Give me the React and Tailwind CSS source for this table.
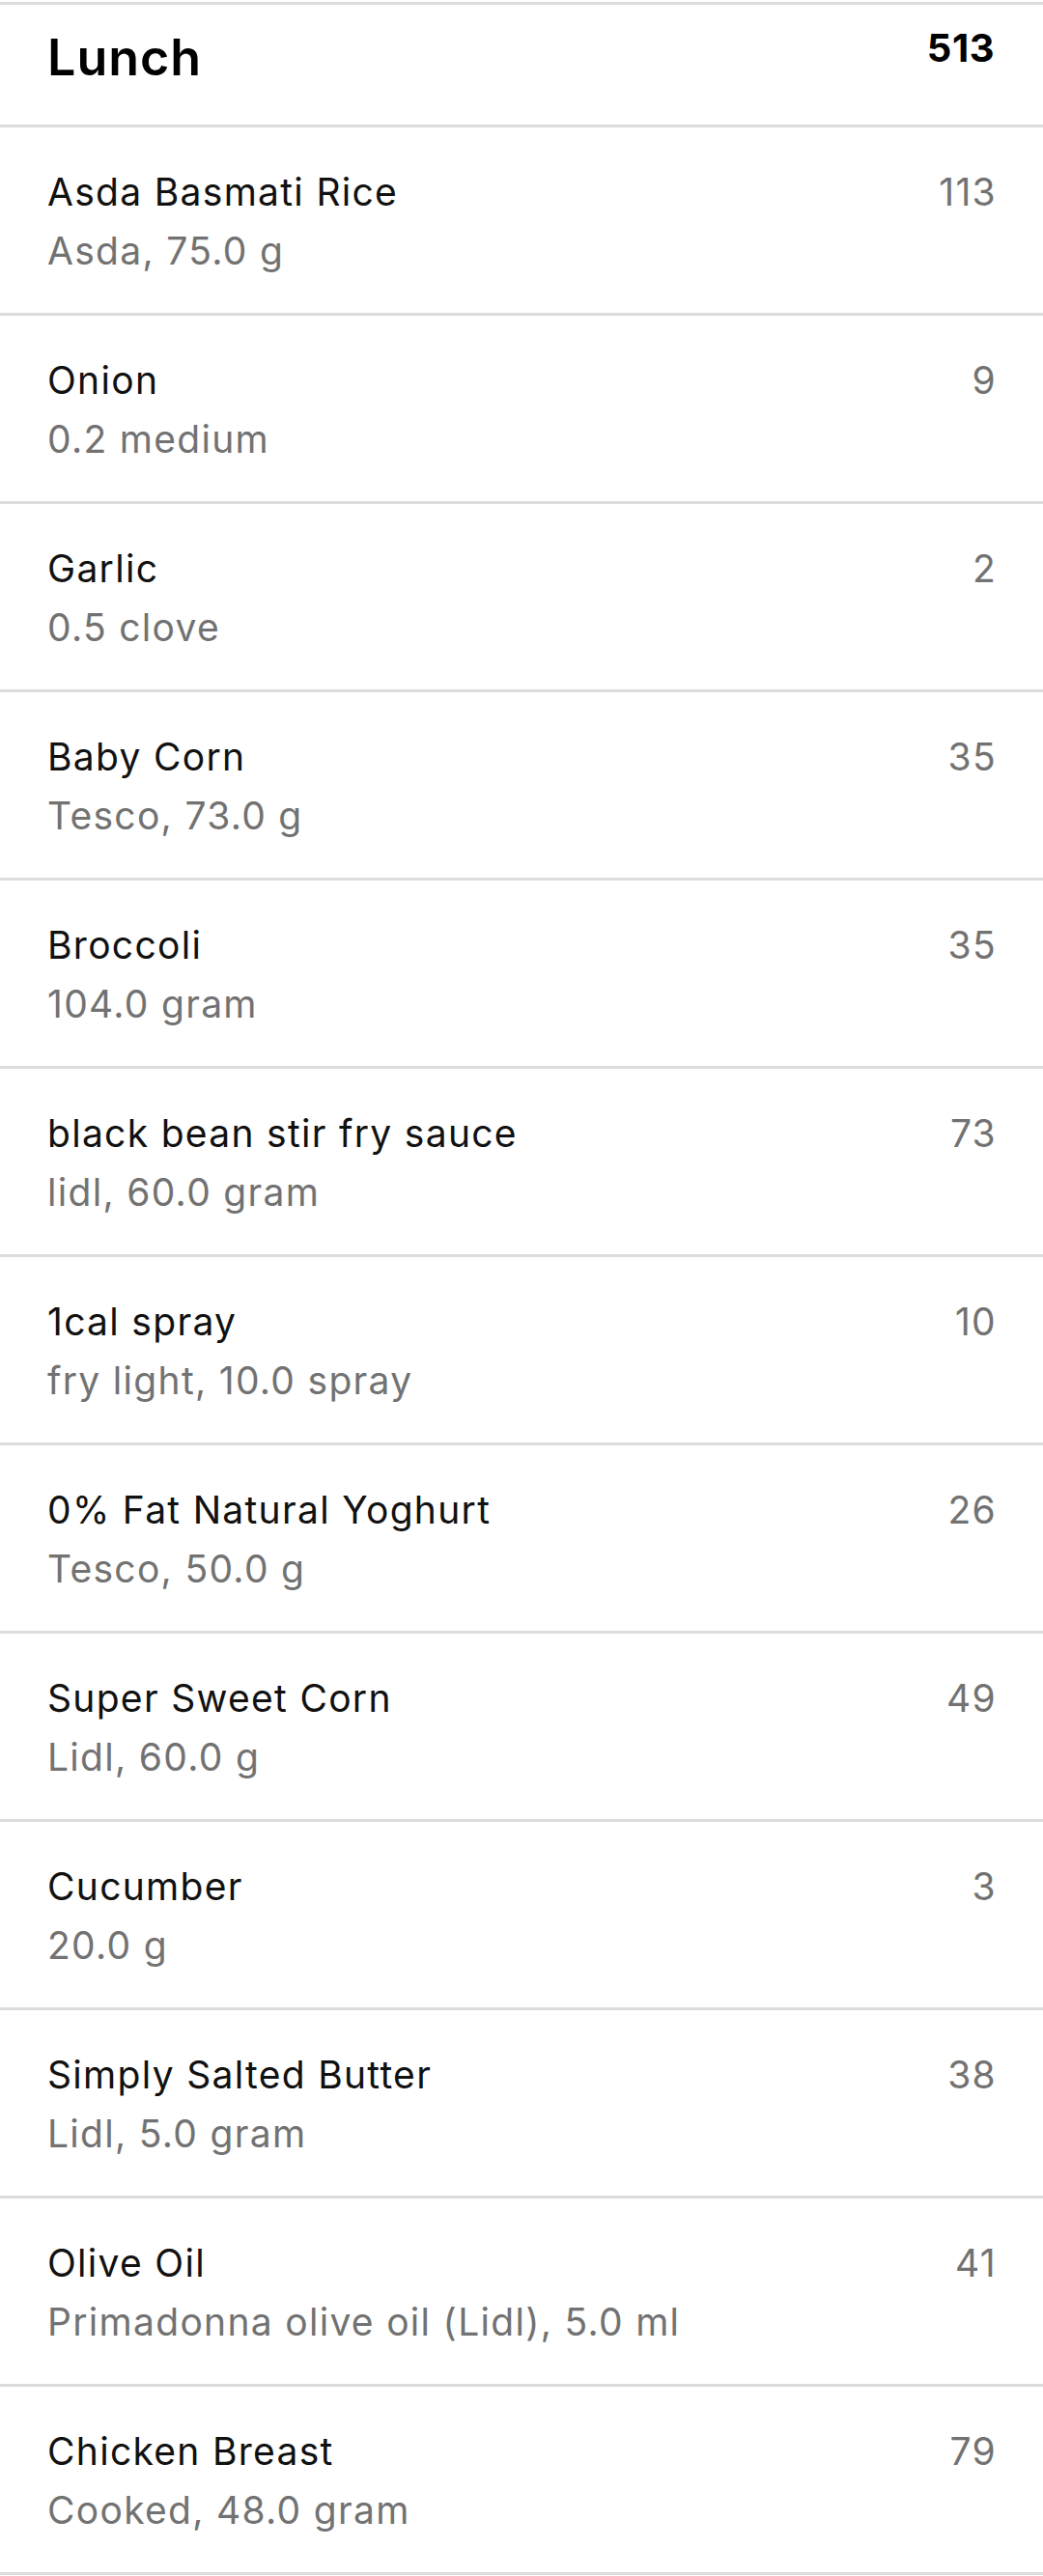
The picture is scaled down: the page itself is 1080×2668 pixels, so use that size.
import React from 'react';

const items = [
  { name: 'Asda Basmati Rice', detail: 'Asda, 75.0 g', kcal: 113 },
  { name: 'Onion', detail: '0.2 medium', kcal: 9 },
  { name: 'Garlic', detail: '0.5 clove', kcal: 2 },
  { name: 'Baby Corn', detail: 'Tesco, 73.0 g', kcal: 35 },
  { name: 'Broccoli', detail: '104.0 gram', kcal: 35 },
  { name: 'black bean stir fry sauce', detail: 'lidl, 60.0 gram', kcal: 73 },
  { name: '1cal spray', detail: 'fry light, 10.0 spray', kcal: 10 },
  { name: '0% Fat Natural Yoghurt', detail: 'Tesco, 50.0 g', kcal: 26 },
  { name: 'Super Sweet Corn', detail: 'Lidl, 60.0 g', kcal: 49 },
  { name: 'Cucumber', detail: '20.0 g', kcal: 3 },
  { name: 'Simply Salted Butter', detail: 'Lidl, 5.0 gram', kcal: 38 },
  { name: 'Olive Oil', detail: 'Primadonna olive oil (Lidl), 5.0 ml', kcal: 41 },
  { name: 'Chicken Breast', detail: 'Cooked, 48.0 gram', kcal: 79 },
];

function FoodRow({ item }) {
  return (
    <div className="h-[195px] border-b-[3px] border-[#dcdcdc] flex justify-between items-start pl-[49px] pr-[48px] pt-[36px] tracking-[1.3px]">
      <div className="flex flex-col">
        <span className="text-[39px] leading-[61px] text-[#111]">{item.name}</span>
        <span className="text-[39px] leading-[61px] text-[#727272]">{item.detail}</span>
      </div>
      <span className="text-[39px] leading-[61px] text-[#727272]">{item.kcal}</span>
    </div>
  );
}

export default function App() {
  return (
    <div className="w-[1080px] bg-white pt-[2px]" style={{ fontFamily: 'Inter, "Noto Sans", sans-serif' }}>
      <div className="border-t-[3px] border-[#dcdcdc]">
        {/* meal header */}
        <div className="h-[127px] border-b-[3px] border-[#dcdcdc] flex justify-between items-start pl-[49px] pr-[50px] pt-[25px]">
          <span className="text-[52px] leading-none font-semibold tracking-[1px] text-black mt-[4px]">Lunch</span>
          <span className="text-[40px] leading-none font-bold tracking-[0.5px] text-black">513</span>
        </div>
        {items.map((item) => (
          <FoodRow key={item.name} item={item} />
        ))}
      </div>
    </div>
  );
}
